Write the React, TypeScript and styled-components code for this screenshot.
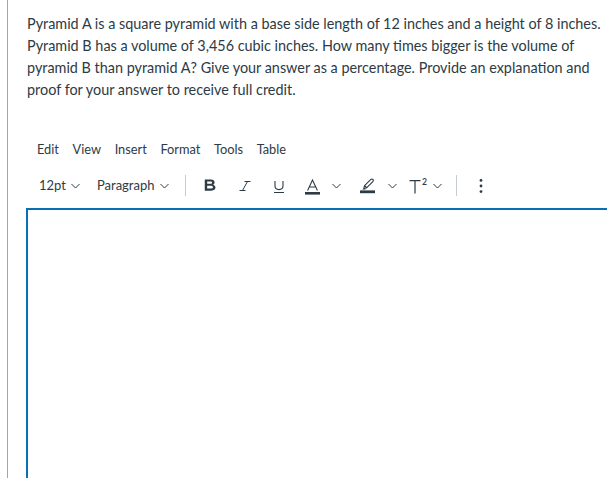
import styled, { createGlobalStyle } from "styled-components";

const GlobalStyle = createGlobalStyle`
  html, body {
    margin: 0;
    padding: 0;
    background: #ffffff;
    overflow: hidden;
  }
  body {
    font-family: "Lato", "Noto Sans", sans-serif;
    color: #2d3b45;
  }
`;

const INK = "#2d3b45";

const Page = styled.div`
  height: 478px;
  padding-left: 7px;
  overflow: hidden;
`;

const Panel = styled.div`
  height: 100%;
  border-left: 1px solid #a5a5a5;
  padding-left: 18px;
  display: flex;
  flex-direction: column;
`;

const Question = styled.p`
  margin: 13px 0 0 1px;
  width: 590px;
  font-size: 14.4px;
  line-height: 22px;
  color: ${INK};
`;

const Editor = styled.div`
  margin-top: 36px;
  width: 640px;
  display: flex;
  flex-direction: column;
  flex: 1;
`;

const MenuBar = styled.div`
  display: flex;
  padding-left: 11px;
  height: 24px;
  align-items: center;
`;

const MenuItem = styled.span`
  font-size: 12.8px;
  color: ${INK};
  margin-right: 13.6px;
`;

const ToolBar = styled.div`
  display: flex;
  align-items: stretch;
  height: 24px;
  margin-top: 12px;
  padding-left: 13px;
`;

const DropButton = styled.span<{ $ml?: number }>`
  display: flex;
  align-items: center;
  font-size: 13px;
  color: ${INK};
  gap: 5px;
  margin-left: ${(p) => p.$ml ?? 0}px;
`;

const Separator = styled.span<{ $ml: number }>`
  align-self: center;
  width: 1px;
  height: 21px;
  margin-left: ${(p) => p.$ml}px;
  background: #c7cdd1;
`;

const IconButton = styled.span<{ $ml: number }>`
  display: flex;
  margin-left: ${(p) => p.$ml}px;
  color: ${INK};
`;

const EditArea = styled.div`
  flex: 1;
  margin-top: 11px;
  border-top: 2px solid #0770b5;
  border-left: 2px solid #0770b5;
`;

const Chevron = () => (
  <svg width="9" height="24" viewBox="0 0 9 24">
    <path d="M0.5 11 L4.5 15 L8.5 11" fill="none" stroke={INK} strokeWidth="1" />
  </svg>
);

const BoldIcon = () => (
  <svg width="12" height="24" viewBox="-0.1 2.3 11 21">
    <path
      d="M0.6 7.8 H6.2 C8.4 7.8 9.6 8.9 9.6 10.4 C9.6 11.5 8.9 12.2 7.9 12.5 C9.3 12.8 10.4 13.7 10.4 15.2 C10.4 17 9 18 6.6 18 H0.6 Z M2.8 9.7 V11.7 H5.8 C6.8 11.7 7.3 11.3 7.3 10.7 C7.3 10.1 6.8 9.7 5.8 9.7 Z M2.8 13.5 V16.1 H6.1 C7.4 16.1 8.1 15.6 8.1 14.8 C8.1 14 7.4 13.5 6.1 13.5 Z"
      fill={INK}
      fillRule="evenodd"
    />
  </svg>
);

const ItalicIcon = () => (
  <svg width="12" height="24" viewBox="0 0 12 24">
    <path d="M5.5 8.5 H11.5 M0.5 17.5 H6.5 M8.5 8.5 L3.5 17.5" fill="none" stroke={INK} strokeWidth="1" />
  </svg>
);

const UnderlineIcon = () => (
  <svg width="12" height="24" viewBox="0 0 12 24">
    <path d="M2 8 V12.8 C2 15.3 3.6 16.6 6 16.6 C8.4 16.6 10 15.3 10 12.8 V8" fill="none" stroke={INK} strokeWidth="1.1" />
    <path d="M1 19.5 H11" stroke={INK} strokeWidth="1" />
  </svg>
);

const TextColorIcon = () => (
  <svg width="15" height="24" viewBox="0 0 15 24">
    <path d="M2.6 17.5 L7.5 7 L12.4 17.5 M4.3 14 H10.7" fill="none" stroke={INK} strokeWidth="1.1" />
    <rect x="0" y="19" width="15" height="2.6" fill={INK} />
  </svg>
);

const HighlightIcon = () => (
  <svg width="15" height="24" viewBox="0 0 15 24">
    <path d="M3.4 15.6 L2.2 16.6 H5.2 L5.9 15.9 Z" fill={INK} />
    <path
      d="M3.8 15.2 L4.6 12.6 L10.6 6.6 C11.3 5.9 12.3 5.9 12.9 6.5 C13.5 7.1 13.5 8 12.8 8.7 L6.8 14.7 L4.2 15.5 Z M4.6 12.6 L6.8 14.7"
      fill="none"
      stroke={INK}
      strokeWidth="1.1"
      strokeLinejoin="round"
    />
    <rect x="0" y="17.4" width="15" height="2.8" fill={INK} />
  </svg>
);

const SuperscriptIcon = () => (
  <svg width="19" height="24" viewBox="0 0 19 24">
    <path d="M0.5 7.6 H11.5 M6 7.6 V20.5" fill="none" stroke={INK} strokeWidth="1.2" />
    <text x="13" y="12" fontSize="8.6" fontWeight="600" fontFamily="Lato, sans-serif" fill={INK}>
      2
    </text>
  </svg>
);

const KebabIcon = () => (
  <svg width="4" height="24" viewBox="0 0 4 24">
    <circle cx="2" cy="7.4" r="1.4" fill={INK} />
    <circle cx="2" cy="13" r="1.4" fill={INK} />
    <circle cx="2" cy="18.6" r="1.4" fill={INK} />
  </svg>
);

export default function App() {
  return (
    <>
      <GlobalStyle />
      <Page>
        <Panel>
          <Question>
            Pyramid A is a square pyramid with a base side length of 12 inches and a height of 8 inches. Pyramid B
            has a volume of 3,456 cubic inches. How many times bigger is the volume of pyramid B than pyramid A? Give
            your answer as a percentage. Provide an explanation and proof for your answer to receive full credit.
          </Question>
          <Editor>
            <MenuBar>
              <MenuItem>Edit</MenuItem>
              <MenuItem>View</MenuItem>
              <MenuItem>Insert</MenuItem>
              <MenuItem>Format</MenuItem>
              <MenuItem>Tools</MenuItem>
              <MenuItem>Table</MenuItem>
            </MenuBar>
            <ToolBar>
              <DropButton>
                12pt <Chevron />
              </DropButton>
              <DropButton $ml={17}>
                Paragraph <Chevron />
              </DropButton>
              <Separator $ml={16} />
              <IconButton $ml={18}>
                <BoldIcon />
              </IconButton>
              <IconButton $ml={23}>
                <ItalicIcon />
              </IconButton>
              <IconButton $ml={22}>
                <UnderlineIcon />
              </IconButton>
              <IconButton $ml={20}>
                <TextColorIcon />
              </IconButton>
              <IconButton $ml={12}>
                <Chevron />
              </IconButton>
              <IconButton $ml={19}>
                <HighlightIcon />
              </IconButton>
              <IconButton $ml={13}>
                <Chevron />
              </IconButton>
              <IconButton $ml={12}>
                <SuperscriptIcon />
              </IconButton>
              <IconButton $ml={5}>
                <Chevron />
              </IconButton>
              <Separator $ml={14} />
              <IconButton $ml={22}>
                <KebabIcon />
              </IconButton>
            </ToolBar>
            <EditArea />
          </Editor>
        </Panel>
      </Page>
    </>
  );
}
